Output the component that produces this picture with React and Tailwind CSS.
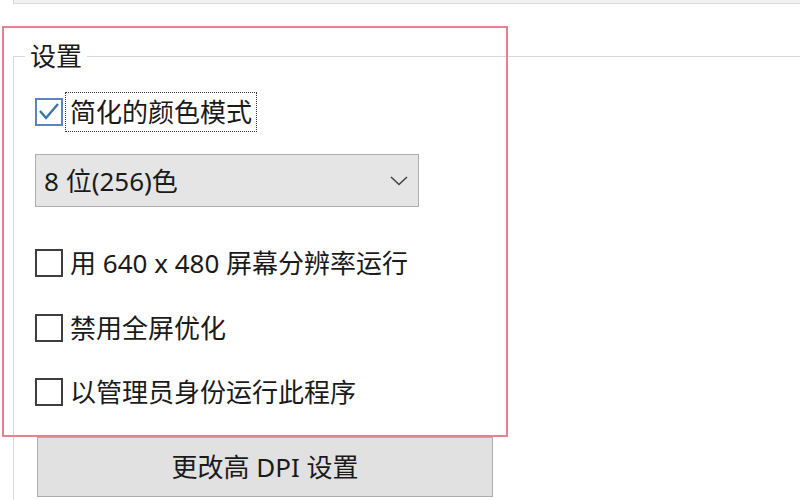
import React from "react";

const Box = ({ checked = false }) =>
  checked ? (
    <span className="flex h-[28px] w-[28px] shrink-0 items-center justify-center border-2 border-[#5a86bd] bg-white">
      <svg width="24" height="24" viewBox="0 0 24 24" fill="none">
        <polyline points="3,11 9,18 21,4" stroke="#3e70ad" strokeWidth="2.4" />
      </svg>
    </span>
  ) : (
    <span className="h-[28px] w-[28px] shrink-0 border-2 border-[#3e3e3e] bg-white" />
  );

const Option = ({ label, checked, focused, className = "" }) => (
  <div className={"flex h-[40px] items-center " + className}>
    <Box checked={checked} />
    <span
      className={
        "ml-[2px] flex h-[40px] items-center px-[4px] " +
        (focused ? "border border-dotted border-[#333]" : "border border-transparent")
      }
    >
      {label}
    </span>
  </div>
);

export default function App() {
  return (
    <div
      className="relative h-[500px] w-[800px] overflow-hidden bg-white text-[26px] leading-none text-[#1a1a1a]"
      style={{ fontFamily: '"Noto Sans", "Noto Sans CJK SC", sans-serif' }}
    >
      {/* bottom edge of the panel above */}
      <div className="ml-[13px] h-[4px] border-b border-l border-[#dadada] bg-[#f2f2f2]" />

      <fieldset className="ml-[13px] mt-[39px] w-[900px] border-l border-t border-[#d9d9d9] pb-[40px] pl-[21px]">
        <legend className="-ml-[10px] px-[5px] leading-[26px]">设置</legend>

        <Option className="mt-[23px]" label="简化的颜色模式" checked focused />

        <div className="mt-[22px] flex h-[53px] w-[384px] items-center justify-between border border-[#adadad] bg-[#e5e5e5] pl-[8px] pr-[10px]">
          <span>8 位(256)色</span>
          <svg width="18" height="10" viewBox="0 0 18 10" fill="none">
            <polyline points="1,1 9,8.5 17,1" stroke="#444" strokeWidth="1.6" />
          </svg>
        </div>

        <Option className="mt-[36px]" label="用 640 x 480 屏幕分辨率运行" />
        <Option className="mt-[25px]" label="禁用全屏优化" />
        <Option className="mt-[24px]" label="以管理员身份运行此程序" />

        <button className="ml-[2px] mt-[25px] flex h-[60px] w-[456px] items-center justify-center border border-[#adadad] bg-[#e1e1e1] text-[26px] text-[#1a1a1a]">
          更改高 DPI 设置
        </button>
      </fieldset>

      {/* highlight frame drawn over the group */}
      <div className="pointer-events-none absolute left-[2px] top-[26px] h-[411px] w-[506px] border-2 border-[#e6818e]" />
    </div>
  );
}
